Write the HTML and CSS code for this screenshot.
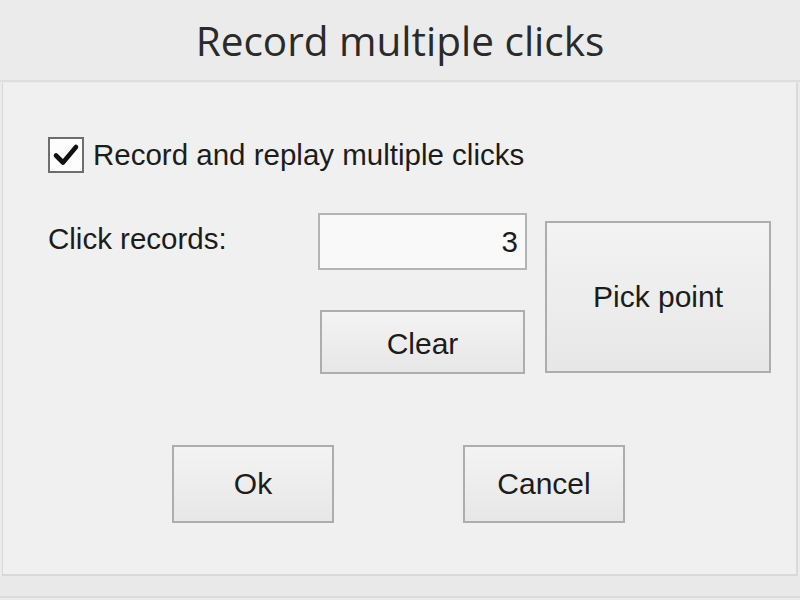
FILE: index.html
```html
<!DOCTYPE html>
<html>
<head>
<meta charset="utf-8">
<link rel="stylesheet" href="styles.css">
</head>
<body>
<div class="window">
  <div class="titlebar"><span class="title">Record multiple clicks</span></div>
  <div class="panel">
    <label class="check-row">
      <span class="checkbox">
        <svg viewBox="0 0 32 32" width="32" height="32"><path d="M6 16.5 L13 23.5 L26 8" fill="none" stroke="#111" stroke-width="4.6" stroke-linecap="round" stroke-linejoin="round"/></svg>
      </span>
      <span class="check-label">Record and replay multiple clicks</span>
    </label>
    <div class="records-row">
      <div class="records-label">Click records:</div>
      <div class="middle-col">
        <div class="textfield">3</div>
        <div class="btn btn-clear">Clear</div>
      </div>
      <div class="btn btn-pick">Pick point</div>
    </div>
    <div class="actions">
      <div class="btn btn-ok">Ok</div>
      <div class="btn btn-cancel">Cancel</div>
    </div>
  </div>
  <div class="footer"></div>
</div>
</body>
</html>
```
FILE: styles.css
```css
html, body {
  margin: 0;
  padding: 0;
  background: #ebebeb;
}
.window {
  width: 800px;
  height: 600px;
  display: flex;
  flex-direction: column;
  background: #ebebeb;
  font-family: "Liberation Sans", Arial, sans-serif;
  color: #1c1c1c;
  overflow: hidden;
}
.titlebar {
  height: 80px;
  flex: none;
  display: flex;
  align-items: center;
  justify-content: center;
  border-bottom: 2px solid #dedede;
}
.title {
  font-family: "Open Sans", "Noto Sans", sans-serif;
  font-size: 40.5px;
  color: #2a2a2a;
  padding-top: 1px;
}
.panel {
  flex: none;
  margin: 1px 2px 0 2px;
  height: 493px;
  background: #f0f0f0;
  border-left: 1px solid #d8d8d8;
  border-right: 2px solid #dadada;
  border-bottom: 2px solid #d8d8d8;
  padding: 54px 0 0 45px;
  box-sizing: border-box;
}
.check-row {
  display: flex;
  align-items: center;
  gap: 9px;
  height: 36px;
}
.checkbox {
  width: 32px;
  height: 32px;
  border: 2px solid #6e6e6e;
  background: #fdfdfd;
  display: flex;
  align-items: center;
  justify-content: center;
}
.check-label {
  font-size: 29.5px;
}
.records-row {
  display: flex;
  margin-top: 40px;
}
.records-label {
  width: 270px;
  font-size: 29.5px;
  padding-top: 9px;
}
.middle-col {
  display: flex;
  flex-direction: column;
  width: 209px;
}
.textfield {
  height: 57px;
  box-sizing: border-box;
  border: 2px solid #b4b4b4;
  background: #f9f9f9;
  text-align: right;
  font-size: 29.5px;
  padding: 10px 7px 0 0;
}
.btn {
  box-sizing: border-box;
  border: 2px solid #adadad;
  background: linear-gradient(#f3f3f3, #e7e7e7);
  display: flex;
  align-items: center;
  justify-content: center;
  font-size: 30px;
}
.btn-clear {
  margin: 40px 0 0 2px;
  width: 205px;
  height: 64px;
  padding-top: 4px;
}
.btn-pick {
  margin: 8px 0 0 18px;
  width: 226px;
  height: 152px;
}
.actions {
  display: flex;
  margin: 71px 0 0 124px;
  gap: 129px;
}
.btn-ok, .btn-cancel {
  width: 162px;
  height: 78px;
}
.footer {
  flex: none;
  height: 20px;
  border-bottom: 2px solid #dcdcdc;
  background: #e9e9e9;
}
```
